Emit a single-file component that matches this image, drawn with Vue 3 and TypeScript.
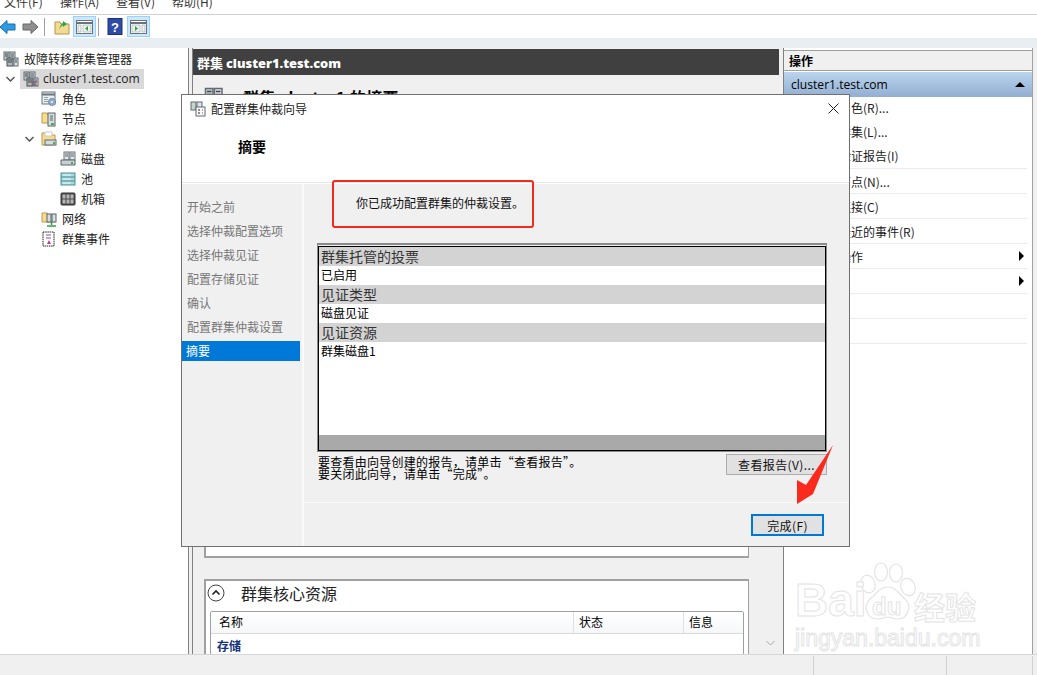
<script setup lang="ts">
interface TreeRow { label: string; level: number; icon: string; chevron?: boolean; selected?: boolean }
const menus = ['文件(F)', '操作(A)', '查看(V)', '帮助(H)']
const tree: TreeRow[] = [
  { label: '故障转移群集管理器', level: 0, icon: 'cluster' },
  { label: 'cluster1.test.com', level: 0, icon: 'cluster', chevron: true, selected: true },
  { label: '角色', level: 1, icon: 'roles' },
  { label: '节点', level: 1, icon: 'nodes' },
  { label: '存储', level: 1, icon: 'folder', chevron: true },
  { label: '磁盘', level: 2, icon: 'disk' },
  { label: '池', level: 2, icon: 'pool' },
  { label: '机箱', level: 2, icon: 'chassis' },
  { label: '网络', level: 1, icon: 'network' },
  { label: '群集事件', level: 1, icon: 'events' },
]
const actions = [
  { label: '配置角色(R)...', h: 24, top: true },
  { label: '验证群集(L)...', h: 24, top: true },
  { label: '查看验证报告(I)', h: 24, line: true, top: true },
  { label: '添加节点(N)...', h: 25, line: true },
  { label: '关闭连接(C)', h: 25, line: true },
  { label: '重置最近的事件(R)', h: 25, line: true },
  { label: '更多操作', h: 25, line: true, more: true },
  { label: '查看', h: 25, line: true, more: true },
  { label: '刷新', h: 25, line: true },
  { label: '帮助', h: 25, line: true },
]
const steps = ['开始之前', '选择仲裁配置选项', '选择仲裁见证', '配置存储见证', '确认', '配置群集仲裁设置', '摘要']
const report = [
  { head: '群集托管的投票', value: '已启用' },
  { head: '见证类型', value: '磁盘见证' },
  { head: '见证资源', value: '群集磁盘1' },
]
</script>

<template>
  <div class="app">
    <svg class="defs" width="0" height="0">
      <defs>
        <symbol id="i-cluster" viewBox="0 0 16 16">
          <rect x="1" y="1" width="5" height="8" fill="#c5ced2" stroke="#5f6b70" />
          <rect x="7" y="1" width="5" height="8" fill="#dfe5e7" stroke="#5f6b70" />
          <rect x="4" y="7" width="6" height="8" fill="#aeb8bc" stroke="#444f54" />
          <rect x="11" y="7" width="4" height="8" fill="#dfe5e7" stroke="#5f6b70" />
          <path d="M2 3h3M8 3h3M2 5h3M8 5h3M5 9h4M5 11h4M12 9h2M12 11h2" stroke="#39454a" />
        </symbol>
        <symbol id="i-clusterx" viewBox="0 0 16 16">
          <use href="#i-cluster" width="16" height="16" />
          <path d="M8 10l6 5M14 10l-6 5" stroke="#c2572b" stroke-width="1.3" />
          <circle cx="11" cy="12.500" r="2" fill="none" stroke="#3a78b8" />
        </symbol>
        <symbol id="i-roles" viewBox="0 0 16 16">
          <rect x="1" y="1" width="13" height="12" fill="#e8edf0" stroke="#69757b" />
          <path d="M1 3.500h13" stroke="#69757b" stroke-width="2" />
          <path d="M3 6.500h4M3 8.500h4M3 10.500h4" stroke="#9aa5aa" />
          <circle cx="11" cy="11" r="3.600" fill="#8fa9c6" stroke="#5f7a98" stroke-dasharray="1.500 .6" />
          <circle cx="11" cy="11" r="1.100" fill="#eef3f7" />
        </symbol>
        <symbol id="i-nodes" viewBox="0 0 16 16">
          <path d="M1 2h5l1 2h6v8H1z" fill="#f6dc8f" stroke="#b89a4e" />
          <rect x="7" y="2" width="7" height="13" fill="#d7dee1" stroke="#59656a" />
          <path d="M9 5h3M9 7h3M9 9h3" stroke="#59656a" />
          <rect x="10" y="12" width="3" height="2" fill="#45b04a" />
        </symbol>
        <symbol id="i-folder" viewBox="0 0 16 16">
          <path d="M1 2h5l1 2h7v10H1z" fill="#f6dc8f" stroke="#b89a4e" />
          <path d="M4 1h7v4H4z" fill="#fff" stroke="#c9c9c9" />
          <rect x="4" y="9" width="11" height="5" fill="#d5dbde" stroke="#5f6b70" />
          <rect x="12" y="11" width="2" height="2" fill="#45b04a" />
        </symbol>
        <symbol id="i-disk" viewBox="0 0 16 16">
          <rect x="4" y="1" width="5" height="8" fill="#e3e8ea" stroke="#6c777c" />
          <rect x="10" y="1" width="5" height="8" fill="#e3e8ea" stroke="#6c777c" />
          <path d="M1 9h14v5H1z" fill="#c9d0d3" stroke="#59646a" />
          <path d="M5 3h3M5 5h3M11 3h3M11 5h3" stroke="#59646a" />
          <rect x="11" y="11" width="2" height="2" fill="#45b04a" />
        </symbol>
        <symbol id="i-pool" viewBox="0 0 16 16">
          <rect x="1" y="2" width="14" height="12" fill="#a8d8dc" stroke="#4b8f96" />
          <path d="M1 6h14M1 10h14" stroke="#4b8f96" />
          <path d="M3 4h8M3 8h8M3 12h8" stroke="#e9f7f8" />
        </symbol>
        <symbol id="i-chassis" viewBox="0 0 16 16">
          <rect x="1" y="2" width="14" height="12" rx="1" fill="#4d4d4d" stroke="#333" />
          <path d="M2.500 3.500h3v4h-3zM6.500 3.500h3v4h-3zM10.500 3.500h3v4h-3zM2.500 8.500h3v4h-3zM6.500 8.500h3v4h-3zM10.500 8.500h3v4h-3z" fill="#b5b5b5" />
        </symbol>
        <symbol id="i-network" viewBox="0 0 16 16">
          <path d="M1 2h5l1 2h6v7H1z" fill="#f6dc8f" stroke="#b89a4e" />
          <rect x="6" y="3" width="4" height="8" fill="#d7dee1" stroke="#59656a" />
          <rect x="11" y="3" width="4" height="8" fill="#d7dee1" stroke="#59656a" />
          <path d="M10.500 11v3M6 15h9" stroke="#35a047" stroke-width="1.500" />
        </symbol>
        <symbol id="i-events" viewBox="0 0 16 16">
          <rect x="2" y="1" width="11" height="14" fill="#fff" stroke="#222" stroke-dasharray="1.500 .7" />
          <path d="M5 4h5M5 7h5" stroke="#7a4fae" />
          <path d="M8 9l-2 4h4z" fill="#c23a8d" />
        </symbol>
        <symbol id="i-wizard" viewBox="0 0 16 16">
          <rect x="1" y="1" width="5" height="8" fill="#c3d6c7" stroke="#5f6b70" />
          <rect x="7" y="1" width="5" height="6" fill="#dfe5e7" stroke="#5f6b70" />
          <rect x="6" y="6" width="9" height="9" fill="#f8f8f8" stroke="#5f6b70" />
          <path d="M8 9h2M8 12h2" stroke="#222" />
          <path d="M12 9h1M12 12h1" stroke="#c33" />
        </symbol>
      </defs>
    </svg>

    <header class="menubar">
      <span v-for="m in menus" :key="m" class="menu">{{ m }}</span>
    </header>

    <div class="toolbar">
      <svg class="tool-nav" width="16" height="16" viewBox="0 0 16 16">
        <path d="M0 8l7-6.500V5h8v6H7v3.500z" fill="#2f9be0" stroke="#1a6db0" />
      </svg>
      <svg class="tool-nav" width="16" height="16" viewBox="0 0 16 16">
        <path d="M16 8L9 1.500V5H1v6h8v3.500z" fill="#909090" stroke="#666" />
      </svg>
      <i class="tool-sep"></i>
      <svg class="tool-plain" width="16" height="16" viewBox="0 0 16 16">
        <path d="M1 3h5l1 2h8v10H1z" fill="#f4db93" stroke="#b3954a" />
        <path d="M5 11c1-4 2-6 4-7V2l4 3-4 3V6c-1 1-3 2-4 5z" fill="#2fa53c" />
      </svg>
      <span class="tool-btn on">
        <svg width="17" height="16" viewBox="0 0 17 16">
          <rect x=".5" y="1.500" width="16" height="13" fill="#fff" stroke="#68747a" />
          <path d="M1 4h15" stroke="#68747a" stroke-width="2" />
          <path d="M2 6h3v7H2zM7 6h8v7H7z" fill="#eef1f2" stroke="#9aa5aa" stroke-width=".6" />
          <path d="M12 7v5l-3-2.500z" fill="#2fa53c" />
        </svg>
      </span>
      <i class="tool-sep"></i>
      <svg class="tool-plain help" width="16" height="17" viewBox="0 0 16 17">
        <rect x="1" y="0.500" width="14" height="16" fill="#2e4ca5" stroke="#1c2f78" />
        <text x="8" y="13.500" text-anchor="middle" font-family="Liberation Sans, sans-serif" font-size="13" font-weight="700" fill="#fff">?</text>
      </svg>
      <span class="tool-btn on">
        <svg width="17" height="16" viewBox="0 0 17 16">
          <rect x=".5" y="1.500" width="16" height="13" fill="#fff" stroke="#68747a" />
          <path d="M1 4h15" stroke="#68747a" stroke-width="2" />
          <path d="M2 6h8v7H2zM12 6h3v7h-3z" fill="#eef1f2" stroke="#9aa5aa" stroke-width=".6" />
          <path d="M5 7v5l3-2.500z" fill="#2fa53c" />
        </svg>
      </span>
    </div>

    <main class="workspace">
      <nav class="tree">
        <div v-for="row in tree" :key="row.label" class="tree-row" :class="'lv' + row.level">
          <span class="tree-hit" :class="{ selected: row.selected }">
            <svg v-if="row.chevron" class="chev" width="9" height="6" viewBox="0 0 9 6">
              <path d="M.5 1l4 4 4-4" fill="none" stroke="#555" stroke-width="1.500" />
            </svg>
            <svg class="tree-icon" width="16" height="16">
              <use :href="'#i-' + (row.selected ? 'clusterx' : row.icon)" />
            </svg>
            <span class="tree-label" :class="{ latin: row.selected }">{{ row.label }}</span>
          </span>
        </div>
      </nav>

      <section class="center">
        <h2 class="center-head">群集 <b>cluster1.test.com</b></h2>
        <div class="center-body">
          <div class="center-scroll">
            <div class="summary-title">
              <svg width="24" height="24"><use href="#i-cluster" /></svg>
              <span>群集 cluster1 的摘要</span>
            </div>
            <div class="card card-top"></div>
            <div class="card card-res">
              <div class="card-title">
                <svg width="18" height="18" viewBox="0 0 18 18">
                  <circle cx="9" cy="9" r="8" fill="#fff" stroke="#444" />
                  <path d="M5.500 10.500L9 7l3.500 3.500" fill="none" stroke="#222" stroke-width="1.600" />
                </svg>
                <span>群集核心资源</span>
              </div>
              <div class="res-table">
                <div class="res-head">
                  <span class="c-name">名称</span>
                  <span class="c-state">状态</span>
                  <span class="c-info">信息</span>
                </div>
                <div class="res-group">存储</div>
              </div>
            </div>
          </div>
          <div class="scrollbar">
            <svg width="9" height="6" viewBox="0 0 9 6">
              <path d="M.5 1l4 4 4-4" fill="none" stroke="#a8a8a8" />
            </svg>
          </div>
        </div>
      </section>

      <aside class="actions">
        <div class="actions-head">操作</div>
        <div class="actions-sec">
          <span>cluster1.test.com</span>
          <i class="tri-up"></i>
        </div>
        <div
          v-for="a in actions"
          :key="a.label"
          class="action"
          :class="{ line: a.line, top: a.top }"
          :style="{ height: a.h + 'px' }"
        >
          <span>{{ a.label }}</span>
          <i v-if="a.more" class="tri-right"></i>
        </div>
        <div class="watermark">
          <svg class="paw" width="58" height="64" viewBox="0 0 58 64">
            <g fill="#fff" stroke="#e4e4e4" stroke-width="1.200">
              <ellipse cx="9" cy="22" rx="7" ry="9" transform="rotate(-20 9 22)" />
              <ellipse cx="22" cy="10" rx="6.500" ry="9" />
              <ellipse cx="37" cy="11" rx="6.500" ry="9" />
              <ellipse cx="49" cy="25" rx="7" ry="9" transform="rotate(-25 49 25)" />
              <path d="M29 25c8 0 11 7 17 12 7 6 4 20-8 20-4 0-6-2-9-2s-6 2-10 2C7 57 4 44 11 37c6-4 9-12 18-12z" />
            </g>
          </svg>
          <span class="wm-bai">Bai</span>
          <span class="wm-du">du</span>
          <span class="wm-cn">经验</span>
          <span class="wm-url">jingyan.baidu.com</span>
        </div>
      </aside>

      <div class="dialog">
        <div class="dlg-title">
          <svg width="16" height="16"><use href="#i-wizard" /></svg>
          <span>配置群集仲裁向导</span>
          <svg class="dlg-close" width="11" height="11" viewBox="0 0 11 11">
            <path d="M.5.500l10 10M10.500.500l-10 10" stroke="#222" />
          </svg>
        </div>
        <div class="dlg-head">摘要</div>
        <div class="dlg-body">
          <ul class="steps">
            <li v-for="s in steps" :key="s" :class="{ active: s === '摘要' }">{{ s }}</li>
          </ul>
          <div class="dlg-main">
            <div class="dlg-content">
              <p class="success">你已成功配置群集的仲裁设置。</p>
              <div class="report">
                <div class="report-inner">
                  <div class="report-rows">
                    <template v-for="r in report" :key="r.head">
                      <div class="r-head">{{ r.head }}</div>
                      <div class="r-val">{{ r.value }}</div>
                    </template>
                  </div>
                  <div class="report-scroll"></div>
                </div>
              </div>
              <div class="notes">
                <p>要查看由向导创建的报告，请单击“查看报告”。<br />要关闭此向导，请单击“完成”。</p>
                <button class="btn" type="button">查看报告(V)...</button>
              </div>
            </div>
            <div class="dlg-foot">
              <button class="btn primary" type="button">完成(F)</button>
            </div>
          </div>
        </div>
      </div>

      <div class="mark-box"></div>
      <svg class="mark-arrow" width="40" height="62" viewBox="0 0 40 62">
        <path d="M37 0L17 49 1 59 1 35 10 40z" fill="#fa2a1c" />
      </svg>
    </main>

    <footer class="statusbar">
      <i class="st st1"></i><i class="st st2"></i><i class="st st3"></i>
    </footer>
  </div>
</template>

<style scoped>
.app {
  position: relative;
  width: 1037px;
  height: 675px;
  overflow: hidden;
  display: flex;
  flex-direction: column;
  background: #f0f0f0;
  color: #000;
  font-family: "Noto Sans CJK SC", "Noto Sans", sans-serif;
  font-size: 12px;
}
.defs { position: absolute; }
.menubar {
  height: 15px;
  flex: none;
  display: flex;
  background: #fff;
  border-bottom: 1px solid #d0d0d0;
  overflow: hidden;
  box-sizing: border-box;
  padding-left: 4px;
  gap: 18px;
  line-height: 10px;
  color: #333;
}
.menu { display: block; margin-top: -3px; width: 38px; white-space: nowrap; }
.toolbar {
  height: 23px;
  flex: none;
  background: #fff;
  display: flex;
  align-items: center;
}
.tool-nav { margin-right: 6px; }
.tool-sep { width: 1px; height: 18px; background: #a0a0a0; margin-right: 9px; }
.tool-plain { margin-right: 3px; }
.tool-plain.help { margin-left: -1px; margin-right: 4px; }
.tool-btn {
  width: 23px;
  height: 21px;
  display: flex;
  align-items: center;
  justify-content: center;
  box-sizing: border-box;
  margin-right: 2px;
}
.tool-btn.on { background: #cce8ff; border: 1px solid #99d1ff; }
.workspace {
  position: relative;
  flex: none;
  height: 616px;
  background: #f0f0f0;
  border-top: 10px solid #e9eef3;
  box-sizing: border-box;
  display: flex;
}
.tree {
  width: 189px;
  box-sizing: border-box;
  flex: none;
  background: #fff;
  border-right: 1px solid #808080;
  padding-top: 1px;
  height: 606px;
  color: #222;
}
.tree-row { height: 20px; display: flex; }
.tree-hit {
  position: relative;
  display: flex;
  align-items: center;
  height: 20px;
  padding-right: 4px;
}
.tree-hit.selected { background: #d9d9d9; margin-left: 20px; }
.lv0 .tree-icon { margin-left: 3px; }
.lv1 .tree-icon { margin-left: 41px; }
.lv2 .tree-icon { margin-left: 60px; }
.tree-label { margin-left: 5px; line-height: 20px; }
.latin { font-family: "Open Sans", "Noto Sans", sans-serif; font-size: 12.1px; margin-left: 4px; }
.chev { position: absolute; left: 25px; top: 7px; }
.selected .chev { left: -14px; }
.center {
  width: 586px;
  flex: none;
  margin-left: 3px;
  display: flex;
  flex-direction: column;
  height: 606px;
  border-left: 1px solid #808080;
}
.center-head {
  margin: 1px 0 0;
  height: 26px;
  background: #404040;
  color: #fff;
  font-size: 13px;
  font-weight: 700;
  line-height: 28px;
  padding-left: 4px;
  flex: none;
}
.center-head b { font-family: "Open Sans", "Noto Sans", sans-serif; font-size: 12.8px; }
.center-body { flex: 1; display: flex; min-height: 0; }
.center-scroll {
  width: 557px;
  flex: none;
  overflow: hidden;
  padding-left: 11px;
}
.summary-title {
  height: 45px;
  display: flex;
  align-items: flex-start;
  padding-top: 12px;
  box-sizing: border-box;
  font-size: 16px;
  font-weight: 700;
  gap: 15px;
  line-height: 20px;
  letter-spacing: .35px;
  white-space: nowrap;
}
.card {
  width: 545px;
  box-sizing: border-box;
  background: #fff;
  border: 2px solid #a0a0a0;
  border-width: 2px 1px 2px 2px;
}
.card-top { height: 438px; }
.card-res { margin-top: 21px; height: 121px; overflow: hidden; }
.card-title {
  display: flex;
  align-items: flex-start;
  height: 30px;
  padding: 3px 0 0 1px;
  box-sizing: border-box;
  gap: 16px;
  font-size: 16px;
  line-height: 18px;
  color: #222;
}
.res-table {
  margin: 0 4px 0 4px;
  border: 1px solid #a0a0a0;
  border-radius: 2px;
}
.res-head {
  display: flex;
  height: 21px;
  line-height: 20px;
  border-bottom: 1px solid #d9d9d9;
  background: linear-gradient(#fff, #f5f7f9);
}
.c-name { width: 363px; padding-left: 8px; box-sizing: border-box; border-right: 1px solid #e0e0e0; }
.c-state { width: 110px; padding-left: 5px; box-sizing: border-box; border-right: 1px solid #e0e0e0; }
.c-info { padding-left: 5px; }
.res-group { padding-left: 6px; font-weight: 700; color: #12327c; line-height: 23px; }
.scrollbar {
  flex: 1;
  display: flex;
  flex-direction: column;
  justify-content: flex-end;
  align-items: center;
  padding-bottom: 8px;
}
.actions {
  position: relative;
  width: 250px;
  flex: none;
  margin-left: 4px;
  height: 606px;
  box-sizing: border-box;
  background: #fff;
  border-left: 1px solid #808080;
  border-right: 1px solid #a0a0a0;
  overflow: hidden;
}
.actions-head {
  margin-top: 2px;
  height: 21px;
  line-height: 19px;
  padding-left: 5px;
  font-weight: 700;
  background: #f0f0f0;
  border-top: 1px solid #a0a0a0;
  border-bottom: 1px solid #a0a0a0;
  box-sizing: border-box;
}
.actions-sec {
  margin-top: 1px;
  height: 25px;
  display: flex;
  align-items: center;
  justify-content: space-between;
  padding: 0 7px;
  background: linear-gradient(#bad4ec, #92aed1);
  font-family: "Open Sans", "Noto Sans", sans-serif;
  font-size: 12.1px;
}
.tri-up { width: 0; height: 0; border: 5px solid transparent; border-top: 0; border-bottom: 5px solid #000; }
.tri-right { width: 0; height: 0; border: 5px solid transparent; border-right: 0; border-left: 5px solid #000; margin-right: 3px; }
.action {
  box-sizing: border-box;
  margin-right: 5px;
  padding-left: 31px;
  display: flex;
  align-items: center;
  justify-content: space-between;
  color: #222;
}
.action.top { padding-bottom: 3px; }
.action.line { border-bottom: 1px solid #ececec; }
.watermark {
  position: absolute;
  left: 0;
  top: 0;
  color: #fff;
  font-family: "Liberation Sans", sans-serif;
  pointer-events: none;
}
.watermark span { position: absolute; white-space: nowrap; -webkit-text-stroke: 1px #e4e4e4; }
.paw { position: absolute; left: 75px; top: 514px; }
.wm-bai { left: 11px; top: 527px; font-size: 46px; line-height: 50px; font-weight: 700; }
.wm-du { left: 88px; top: 546px; font-size: 24px; line-height: 26px; font-weight: 700; }
.wm-cn { left: 130px; top: 538px; font-size: 31px; line-height: 40px; font-family: "Noto Sans CJK SC", sans-serif; font-weight: 700; }
.wm-url { left: 11px; top: 574px; font-size: 23px; line-height: 32px; }
.dialog {
  position: absolute;
  left: 181px;
  top: 46px;
  width: 669px;
  height: 453px;
  box-sizing: border-box;
  background: #fff;
  border: 1px solid #707070;
  display: flex;
  flex-direction: column;
}
.dlg-title {
  height: 27px;
  display: flex;
  align-items: center;
  gap: 5px;
  padding-left: 8px;
  flex: none;
  position: relative;
  color: #222;
}
.dlg-close { position: absolute; right: 10px; top: 8px; }
.dlg-head {
  height: 61px;
  flex: none;
  padding-left: 56px;
  font-size: 14px;
  font-weight: 700;
  line-height: 48px;
  border-bottom: 1px solid #e8e8e8;
  box-sizing: border-box;
}
.dlg-body { flex: 1; display: flex; min-height: 0; margin-top: 1px; background: #f0f0f0; }
.steps {
  list-style: none;
  margin: 0;
  padding: 11px 0 0;
  width: 118px;
  flex: none;
  color: #777;
}
.steps li { height: 24px; line-height: 24px; padding-left: 5px; }
.steps li.active { height: 20px; margin-top: 2px; line-height: 20px; padding-left: 4px; background: #0078d7; color: #fff; }
.dlg-main {
  flex: 1;
  display: flex;
  flex-direction: column;
  border-left: 2px solid #fafafa;
  margin-left: 2px;
}
.dlg-content { flex: 1; padding: 0 22px 0 13px; border-bottom: 1px solid #fafafa; }
.success { margin: 10px 0 0 39px; line-height: 17px; height: 49px; color: #111; }
.report { border: 1px solid #8a8a8a; border-top-width: 2px; height: 209px; box-sizing: border-box; padding: 1px 0 0 0; }
.report-inner {
  height: 100%;
  box-sizing: border-box;
  border: 1px solid #000;
  background: #fff;
  display: flex;
  flex-direction: column;
}
.report-rows { flex: 1; }
.r-head { height: 19px; line-height: 19px; font-size: 14px; background: #d3d3d3; padding-left: 2px; color: #333; }
.r-val { height: 19px; line-height: 18px; padding-left: 2px; }
.report-scroll { height: 15px; background: #a9a9a9; }
.notes { position: relative; display: flex; justify-content: space-between; }
.notes p { margin: 4px 0 0 1px; line-height: 12px; letter-spacing: .25px; }
.btn {
  font: inherit;
  color: #111;
  height: 21px;
  width: 101px;
  background: #e1e1e1;
  border: 1px solid #adadad;
  padding: 0;
  margin-top: 2px;
  letter-spacing: .4px;
}
.dlg-foot { height: 43px; flex: none; display: flex; justify-content: flex-end; padding: 11px 25px 0 0; box-sizing: border-box; }
.btn.primary { width: 73px; height: 22px; margin: 0; border: 2px solid #0078d7; }
.mark-box {
  position: absolute;
  left: 332px;
  top: 132px;
  width: 202px;
  height: 48px;
  box-sizing: border-box;
  border: 2px solid #f02a1c;
  border-radius: 3px;
}
.mark-arrow { position: absolute; left: 796px; top: 397px; }
.statusbar {
  flex: 1;
  position: relative;
  background: #f0f0f0;
  border-top: 1px solid #d6d6d6;
}
.st { position: absolute; top: 1px; bottom: 0; width: 1px; background: #d0d0d0; }
.st1 { left: 813px; }
.st2 { left: 946px; }
.st3 { left: 1032px; }
</style>
